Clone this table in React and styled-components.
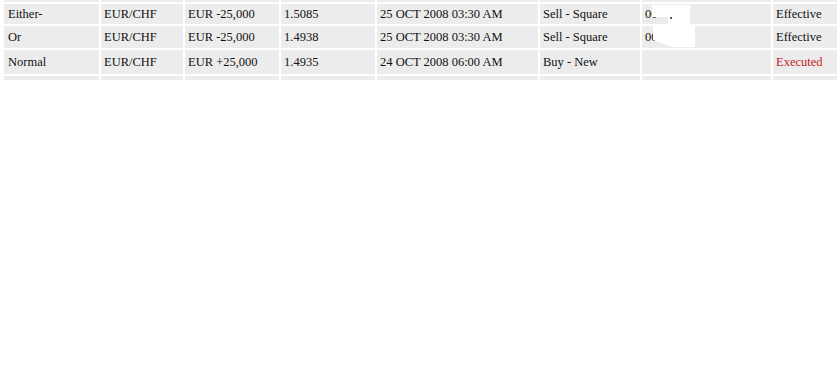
import React from "react";
import styled, { createGlobalStyle } from "styled-components";

const Global = createGlobalStyle`
  html, body { margin: 0; padding: 0; background: #ffffff; }
  body { font-family: "Liberation Serif", "Times New Roman", serif; }
`;

const Page = styled.div`
  position: relative;
  width: 840px;
  height: 384px;
  overflow: hidden;
  background: #ffffff;
`;

const Table = styled.table`
  table-layout: fixed;
  border-collapse: separate;
  border-spacing: 2px;
  width: 837px;
  margin: -2px 0 0 2px;
  font-family: "Liberation Serif", "Times New Roman", serif;
  font-size: 12.5px;
  color: #111;
`;

const Col = styled.col`
  width: ${(p) => p.$w}px;
`;

const Row = styled.tr`
  height: ${(p) => p.$h}px;
`;

const Cell = styled.td`
  background: #ececec;
  padding: 0 0 0 ${(p) => (p.$first ? 4 : 3)}px;
  vertical-align: middle;
  white-space: nowrap;
  overflow: hidden;
  line-height: 14px;
  color: ${(p) => (p.$status === "Executed" ? "#c41e1e" : "#111")};
`;

const Redaction = styled.svg`
  position: absolute;
  left: 0;
  top: 0;
  pointer-events: none;
`;

const widths = [95, 82, 94, 94, 161, 100, 129, 64];

const rows = [
  { h: 20, c: ["Either-", "EUR/CHF", "EUR -25,000", "1.5085", "25 OCT 2008 03:30 AM", "Sell - Square", "00", "Effective"] },
  { h: 22, c: ["Or", "EUR/CHF", "EUR -25,000", "1.4938", "25 OCT 2008 03:30 AM", "Sell - Square", "00", "Effective"] },
  { h: 24, c: ["Normal", "EUR/CHF", "EUR +25,000", "1.4935", "24 OCT 2008 06:00 AM", "Buy - New", "", "Executed"] },
];

function EmptyRow({ h }) {
  return (
    <Row $h={h}>
      {widths.map((w, i) => (
        <Cell key={i} $first={i === 0} />
      ))}
    </Row>
  );
}

export default function App() {
  return (
    <Page>
      <Global />
      <Table>
        <colgroup>
          {widths.map((w, i) => (
            <Col key={i} $w={w} />
          ))}
        </colgroup>
        <tbody>
          <EmptyRow h={2} />
          {rows.map((r, ri) => (
            <Row key={ri} $h={r.h}>
              {r.c.map((t, i) => (
                <Cell key={i} $first={i === 0} $status={i === 7 ? t : undefined}>
                  {t}
                </Cell>
              ))}
            </Row>
          ))}
          <EmptyRow h={4} />
        </tbody>
      </Table>
      <Redaction width="840" height="384" viewBox="0 0 840 384">
        <polygon points="652,5 690,5 690,25 668,25 668,17 652,17" fill="#ffffff" />
        <polygon points="653,25 695,25 695,47 672,47 653,40" fill="#ffffff" />
        <rect x="670" y="17" width="2" height="2" fill="#555" />
      </Redaction>
    </Page>
  );
}
